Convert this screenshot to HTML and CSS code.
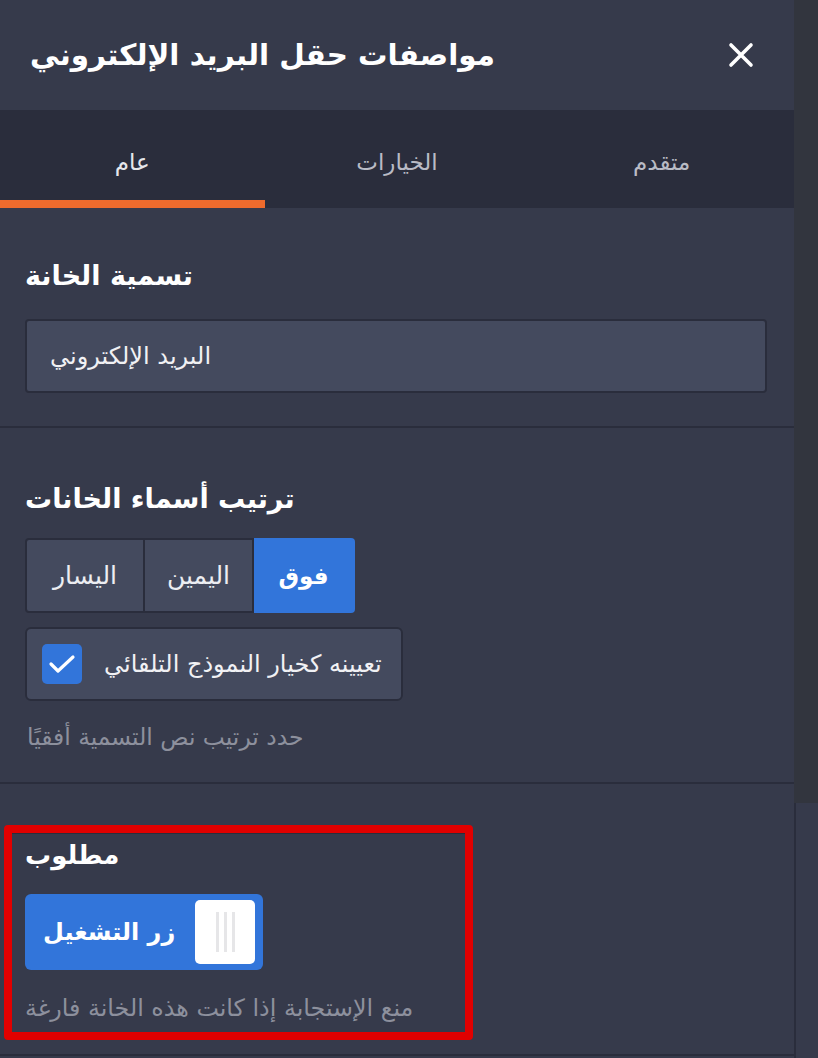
FILE: index.html
```html
<!DOCTYPE html>
<html lang="ar">
<head>
<meta charset="utf-8">
<title>مواصفات حقل البريد الإلكتروني</title>
<link rel="stylesheet" href="styles.css">
</head>
<body>
<div class="layout">
  <div class="panel">
    <header class="header">
      <h1 class="title">مواصفات حقل البريد الإلكتروني</h1>
      <button class="close" aria-label="إغلاق">
        <svg width="26" height="26" viewBox="0 0 26 26"><path d="M3 3 L23 23 M23 3 L3 23" stroke="#fff" stroke-width="3.6" stroke-linecap="round" fill="none"/></svg>
      </button>
    </header>
    <nav class="tabs">
      <div class="tab active">عام</div>
      <div class="tab">الخيارات</div>
      <div class="tab">متقدم</div>
    </nav>

    <section class="section s1">
      <h2 class="heading">تسمية الخانة</h2>
      <div class="input">البريد الإلكتروني</div>
    </section>

    <section class="section s2">
      <h2 class="heading">ترتيب أسماء الخانات</h2>
      <div class="segmented">
        <div class="seg seg-left">اليسار</div>
        <div class="seg seg-mid">اليمين</div>
        <div class="seg seg-right active">فوق</div>
      </div>
      <div class="check-row">
        <span class="checkbox">
          <svg width="40" height="40" viewBox="0 0 40 40"><path d="M9 20 L16 27 L31 13" stroke="#fff" stroke-width="3.2" stroke-linecap="round" stroke-linejoin="round" fill="none"/></svg>
        </span>
        <span class="check-label">تعيينه كخيار النموذج التلقائي</span>
      </div>
      <p class="help">حدد ترتيب نص التسمية أفقيًا</p>
    </section>

    <section class="section s3">
      <div class="highlight">
        <h2 class="heading">مطلوب</h2>
        <div class="toggle">
          <span class="toggle-label">زر التشغيل</span>
          <span class="knob"><i></i><i></i><i></i></span>
        </div>
        <p class="help">منع الإستجابة إذا كانت هذه الخانة فارغة</p>
      </div>
    </section>
  </div>
  <div class="scrollbar">
    <div class="thumb"></div>
    <div class="track"></div>
  </div>
</div>
</body>
</html>
```
FILE: styles.css
```css
html, body {
  margin: 0;
  padding: 0;
  background: #363a4b;
  height: 100%;
  overflow: hidden;
}
body {
  font-family: "DejaVu Sans", "Noto Sans", sans-serif;
  color: #ffffff;
}
.layout {
  display: flex;
  width: 818px;
  height: 1058px;
}
.panel {
  width: 794px;
  flex: none;
  background: #363a4b;
}
.scrollbar {
  width: 24px;
  display: flex;
  flex-direction: column;
}
.thumb {
  height: 803px;
  background: #32353e;
}
.track {
  flex: 1;
  background: #363a4b;
  border-left: 2px solid #2a2d3c;
}

/* header */
.header {
  height: 110px;
  display: flex;
  align-items: center;
  justify-content: space-between;
  padding: 0 40px 0 30px;
  box-sizing: border-box;
}
.title {
  margin: 0;
  font-size: 29.4px;
  font-weight: bold;
  line-height: 40px;
}
.close {
  background: none;
  border: 0;
  padding: 0;
  width: 26px;
  height: 26px;
  display: flex;
}

/* tabs */
.tabs {
  height: 98px;
  display: flex;
  background: #2a2d3c;
}
.tab {
  flex: 1;
  display: flex;
  align-items: center;
  justify-content: center;
  font-size: 23px;
  color: #b9bbc5;
  box-sizing: border-box;
  border-bottom: 8px solid transparent;
  padding-top: 14px;
}
.tab.active {
  color: #e6e7eb;
  border-bottom-color: #ee6b2d;
}

/* sections */
.section {
  border-bottom: 2px solid #2a2d3c;
  padding: 0 25px;
}
.heading {
  margin: 0;
  font-size: 27px;
  font-weight: bold;
  line-height: 36px;
  color: #ffffff;
}
.s1 {
  height: 220px;
  box-sizing: border-box;
  padding-top: 50px;
}
.input {
  margin-top: 25px;
  width: 742px;
  height: 74px;
  box-sizing: border-box;
  background: #444a5e;
  border: 2px solid #2a2d3c;
  border-radius: 4px;
  display: flex;
  align-items: center;
  padding: 0 23px;
  font-size: 24px;
  color: #f1f1f4;
}

.s2 {
  height: 356px;
  box-sizing: border-box;
  padding-top: 53px;
}
.segmented {
  margin-top: 21px;
  display: flex;
  height: 75px;
}
.seg {
  display: flex;
  align-items: center;
  justify-content: center;
  box-sizing: border-box;
  background: #444a5e;
  border: 2px solid #2a2d3c;
  font-size: 25px;
  color: #eceef2;
}
.seg-left {
  width: 120px;
  border-radius: 4px 0 0 4px;
}
.seg-mid {
  width: 109px;
  border-left: 0;
}
.seg-right {
  width: 101px;
  border-left: 0;
  border-radius: 0 4px 4px 0;
}
.seg.active {
  background: #3275da;
  border-color: #3275da;
  font-weight: bold;
  font-size: 23px;
  color: #ffffff;
}
.check-row {
  margin-top: 14px;
  width: 378px;
  height: 74px;
  box-sizing: border-box;
  background: #444a5e;
  border: 2px solid #2a2d3c;
  border-radius: 6px;
  display: flex;
  align-items: center;
  padding: 0 15px 0 15px;
  gap: 22px;
}
.checkbox {
  width: 40px;
  height: 40px;
  flex: none;
  background: #3275da;
  border-radius: 5px;
  display: flex;
}
.check-label {
  font-size: 24px;
  color: #f1f1f4;
  white-space: nowrap;
}
.help {
  margin: 20px 0 0 2px;
  font-size: 23.4px;
  line-height: 32px;
  color: #8d909d;
  white-space: nowrap;
}

.s3 {
  height: 272px;
  box-sizing: border-box;
  padding: 41px 0 0 4px;
}
.highlight {
  width: 469px;
  height: 215px;
  box-sizing: border-box;
  border: 8px solid #e10000;
  border-radius: 4px;
  padding: 4px 0 0 13px;
  box-shadow: inset 0 1px 0 #2a2d3c;
}
.highlight .heading {
  font-size: 26px;
}
.toggle {
  margin-top: 21px;
  width: 238px;
  height: 76px;
  background: #3275da;
  border-radius: 6px;
  display: flex;
  align-items: center;
  justify-content: space-between;
  box-sizing: border-box;
  padding: 0 8px 0 18px;
}
.toggle-label {
  font-size: 24px;
  font-weight: bold;
  color: #ffffff;
}
.knob {
  width: 60px;
  height: 64px;
  background: #ffffff;
  border-radius: 5px;
  display: flex;
  justify-content: center;
  align-items: center;
  gap: 5px;
}
.knob i {
  display: block;
  width: 3px;
  height: 40px;
  background: #e6e6e8;
}
.s3 .help {
  margin: 22px 0 0 0;
  font-size: 23.8px;
}
```
